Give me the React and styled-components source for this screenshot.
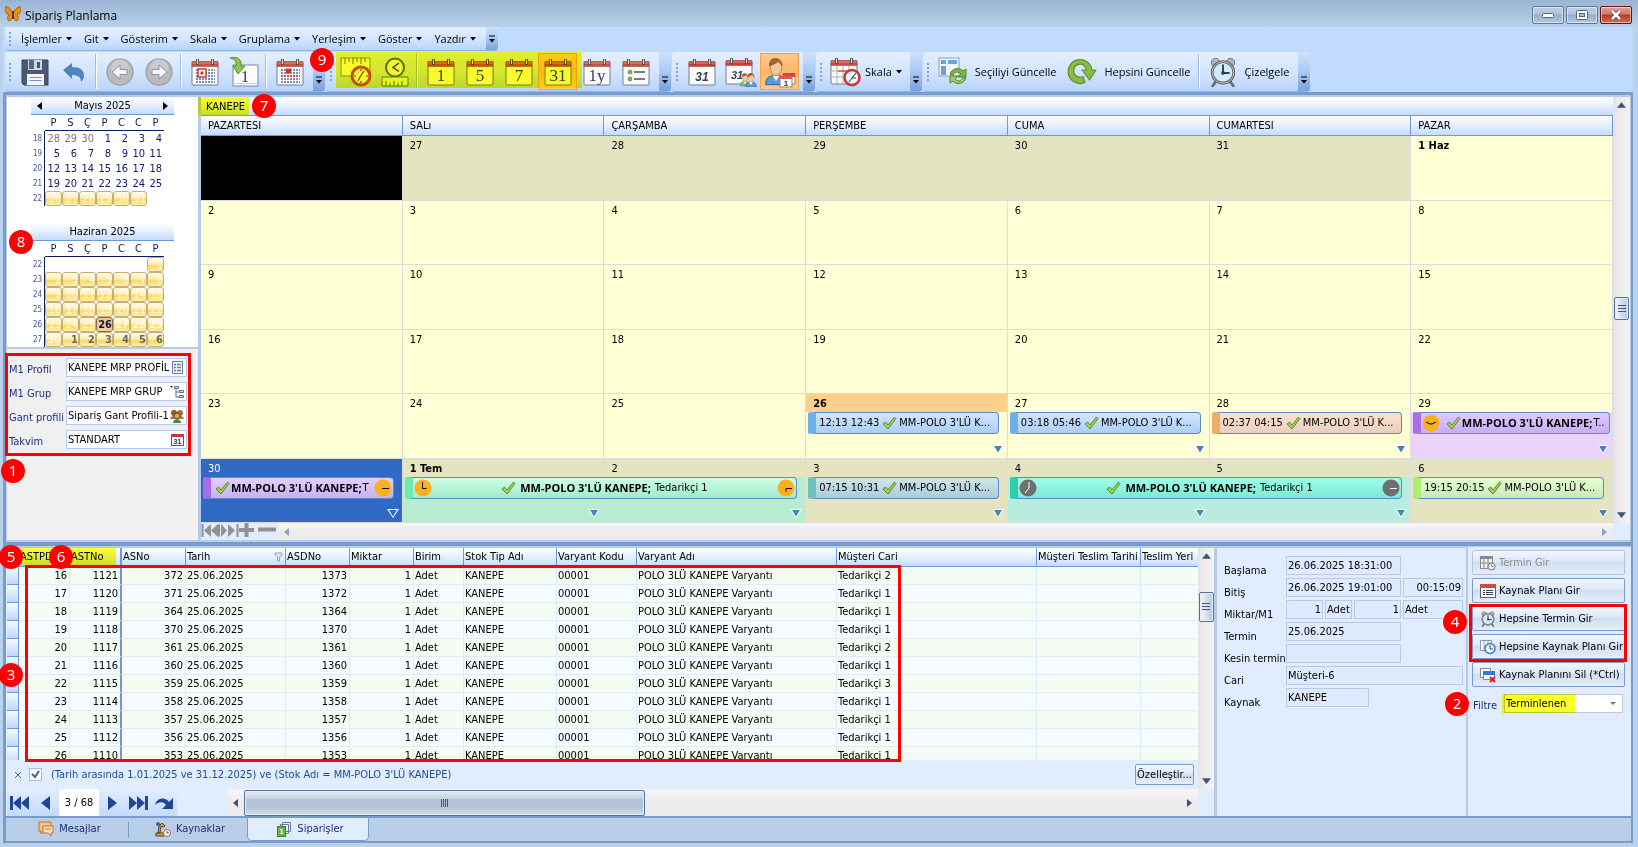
import React from "react";
import styled, { createGlobalStyle, css } from "styled-components";

const UI_FONT = `"DejaVu Sans Condensed", "Open Sans", sans-serif`;
const MENU_FONT = `"Open Sans", "Noto Sans", sans-serif`;

const COLORS = {
  frame: "#b9d1ea",
  chrome: "#bfdbff",
  dark: "#7a9ccc",
  edge: "#b5cbe8",
  pale: "#e1edff",
  line: "#6c9ad6",
  navy: "#1c2f7c",
  red: "#ff0000",
};

const headerFill = "linear-gradient(#ffffff, #e4efff 50%, #c5dcfe)";

const GlobalStyle = createGlobalStyle`
  * { box-sizing: border-box; }
  body {
    margin: 0;
    background: ${COLORS.frame};
    font-family: ${UI_FONT};
    font-size: 11px;
    line-height: 14px;
    color: #000;
  }
  button, input, select { font: inherit; color: inherit; }
  svg { flex: none; }
`;

/* ---------- data ---------- */

const MENUS = ["İşlemler", "Git", "Gösterim", "Skala", "Gruplama", "Yerleşim", "Göster", "Yazdır"];

const MONTHS = [
  {
    title: "Mayıs 2025",
    arrows: true,
    weeks: [
      [18, ["28o", "29o", "30o", "1", "2", "3", "4"]],
      [19, ["5", "6", "7", "8", "9", "10", "11"]],
      [20, ["12", "13", "14", "15", "16", "17", "18"]],
      [21, ["19", "20", "21", "22", "23", "24", "25"]],
      [22, ["26g", "27g", "28g", "29g", "30g", "31g", ""]],
    ],
  },
  {
    title: "Haziran 2025",
    weeks: [
      [22, ["", "", "", "", "", "", "1g"]],
      [23, ["2g", "3g", "4g", "5g", "6g", "7g", "8g"]],
      [24, ["9g", "10g", "11g", "12g", "13g", "14g", "15g"]],
      [25, ["16g", "17g", "18g", "19g", "20g", "21g", "22g"]],
      [26, ["23g", "24g", "25g", "26t", "27b", "28b", "29b"]],
      [27, ["30b", "1n", "2n", "3n", "4n", "5n", "6n"]],
    ],
  },
];

const DAYS = ["PAZARTESI", "SALı", "ÇARŞAMBA", "PERŞEMBE", "CUMA", "CUMARTESI", "PAZAR"];

const OFF = "#e5e4c0";
const ON = "#ffffd5";

// clock hands, drawn on an 18px dial
const HANDS = {
  three: "M8.500 3v6.500h4",
  quarter: "M15 9.500H8",
  open: "M4 8l4 2h2l4-2",
  corner: "M15 9.500H9v3",
  seven: "M10 3v6l-4 5",
};

const WEEKS = [
  {
    days: ["", "27", "28", "29", "30", "31", "1 Haz"],
    fills: ["#000000", OFF, OFF, OFF, OFF, OFF, ON],
  },
  { days: ["2", "3", "4", "5", "6", "7", "8"] },
  { days: ["9", "10", "11", "12", "13", "14", "15"] },
  { days: ["16", "17", "18", "19", "20", "21", "22"] },
  {
    days: ["23", "24", "25", "26", "27", "28", "29"],
    today: 3,
    more: [3, 4, 5, 6],
    tints: { 6: "#e8d4fd" },
    events: [
      { col: 4, time: "12:13 12:43", stripe: "#6faeea", from: "#d3e5ff", to: "#aacdf8" },
      { col: 5, time: "03:18 05:46", stripe: "#6faeea", from: "#d3e5ff", to: "#aacdf8" },
      { col: 6, time: "02:37 04:15", stripe: "#eeac6b", from: "#fbe2cf", to: "#e8cfbf" },
      { col: 7, clock: "open", rest: "T..", wide: true, stripe: "#ab6eea", from: "#dfcbff", to: "#c6adf5" },
    ],
  },
  {
    days: ["30", "1 Tem", "2", "3", "4", "5", "6"],
    fills: ["#316ac5", OFF, OFF, OFF, OFF, OFF, OFF],
    more: [0, 1, 2, 3, 4, 5, 6],
    tints: { 1: "#b8ecd2", 2: "#b8ecd2", 4: "#b8ecdf", 5: "#b8ecdf" },
    events: [
      { col: 1, rest: "T", endClock: "quarter", stripe: "#ab6eea", from: "#e4d0ff", to: "#c7b0f2" },
      { col: 2, span: 2, clock: "three", endClock: "corner", rest: "Tedarikçi 1", stripe: "#6febae", from: "#cdffe6", to: "#a2ebcb" },
      { col: 4, time: "07:15 10:31", stripe: "#6fc0c0", from: "#cfe6ea", to: "#a9ccd9" },
      { col: 5, span: 2, gray: true, clock: "seven", endClock: "quarter", rest: "Tedarikçi 1", stripe: "#30ccaa", from: "#9effe8", to: "#7de7d6" },
      { col: 7, time: "19:15 20:15", stripe: "#aeeb6f", from: "#e5ffcf", to: "#c9e9bd" },
    ],
  },
];

const COLUMNS = [
  ["", 12],
  ["ASTPD", 51],
  ["ASTNo", 52],
  ["ASNo", 64],
  ["Tarih", 100],
  ["ASDNo", 64],
  ["Miktar", 64],
  ["Birim", 50],
  ["Stok Tip Adı", 93],
  ["Varyant Kodu", 80],
  ["Varyant Adı", 200],
  ["Müşteri Cari", 200],
  ["Müşteri Teslim Tarihi", 104],
  ["Teslim Yeri", null],
];

const ORDERS = [
  [16, 1121, 372, 1373, 2],
  [17, 1120, 371, 1372, 1],
  [18, 1119, 364, 1364, 1],
  [19, 1118, 370, 1370, 1],
  [20, 1117, 361, 1361, 2],
  [21, 1116, 360, 1360, 1],
  [22, 1115, 359, 1359, 3],
  [23, 1114, 358, 1358, 1],
  [24, 1113, 357, 1357, 1],
  [25, 1112, 356, 1356, 1],
  [26, 1110, 353, 1353, 1],
];

/* ---------- icons ---------- */

const Svg = ({ w = 28, h = w, box, children }) => (
  <svg width={w} height={h} viewBox={box || `0 0 ${w} ${h}`} fill="none" aria-hidden="true">
    {children}
  </svg>
);

const Page = ({ children, tint = "#c9503f" }) => (
  <>
    <rect x="1" y="4" width="26" height="23" rx="1" fill="#f8fafd" stroke="#7b7f88" />
    <path d="M1 3.500h26v5H1z" fill={tint} stroke="#a8493c" strokeWidth=".6" />
    <path d="M1.500 5h25" stroke="#e98b7a" />
    <path d="M6.500 1v6M21.500 1v6" stroke="#555" strokeWidth="3" />
    <path d="M6.500 1.500v4.500M21.500 1.500v4.500" stroke="#e6e6e6" strokeWidth="1" />
    {children}
  </>
);

const PageIcon = ({ label, sans }) => (
  <Svg>
    <Page tint={sans ? "#d33a38" : undefined}>
      <text
        x="14"
        y="23"
        textAnchor="middle"
        fontSize={sans ? 12 : 17}
        fontFamily={sans ? "Liberation Sans" : "Liberation Serif"}
        fontWeight={sans ? "bold" : "normal"}
        fontStyle={sans ? "italic" : "normal"}
        fill="#3a4250"
      >
        {label}
      </text>
    </Page>
  </Svg>
);

const Dots = ({ row = -1 }) => (
  <>
    {[12, 15, 18, 21, 24].map((y, i) => (
      <path key={y} d={`M5 ${y}h19`} stroke={i === row ? "#d6543f" : "#7d8fb8"} strokeWidth="2" strokeDasharray="2 1" />
    ))}
  </>
);

const TargetPage = () => (
  <Svg>
    <Page>
      <Dots />
      <rect x="7" y="11" width="8" height="8" fill="#fff" stroke="#c33b2d" strokeWidth="1.500" />
      <rect x="9.500" y="13.500" width="3" height="3" fill="#c33b2d" />
    </Page>
  </Svg>
);

const WeekPage = () => (
  <Svg>
    <Page>
      <Dots row={2} />
      <rect x="10" y="10.500" width="5" height="5" fill="#c33b2d" />
    </Page>
  </Svg>
);

const ListPage = () => (
  <Svg>
    <Page>
      <circle cx="8" cy="14" r="2" fill="#7fb04c" stroke="#4f7d28" strokeWidth=".6" />
      <circle cx="8" cy="21" r="2" fill="#7fb04c" stroke="#4f7d28" strokeWidth=".6" />
      <path d="M12 14h11M12 21h11" stroke="#4a5160" strokeWidth="1.500" />
    </Page>
  </Svg>
);

const SaveIcon = () => (
  <Svg>
    <path d="M1 2h26v25H3l-2-2z" fill="#4b5a74" stroke="#38445a" />
    <path d="M7 2h14v10H7z" fill="#cfd6e2" />
    <path d="M8 2h5v9H8z" fill="#5a6880" />
    <path d="M16 4h3v6h-3z" fill="#46536b" />
    <path d="M6 16h17v11H6z" fill="#f3f6fb" />
    <path d="M8.500 19.500h12M8.500 22.500h12" stroke="#6a93cf" />
  </Svg>
);

const UndoIcon = () => (
  <Svg w={24}>
    <path d="M1 10l9-7v4c8 0 12 3 12 9 0 2-1 4-3 6 0-5-3-7-9-7v4z" fill="#4d86c0" />
  </Svg>
);

const RoundArrow = ({ flip }) => (
  <Svg>
    <circle cx="14" cy="14" r="13" fill="#b9babd" stroke="#a2a4a8" strokeWidth="1.500" />
    <circle cx="14" cy="10" r="9" fill="#d6d7d9" opacity=".6" />
    <path
      d={flip ? "M22 14l-8-7v4.500H7v5h7V21z" : "M6 14l8-7v4.500h7v5h-7V21z"}
      fill="#f7f7f7"
      stroke="#8d8f93"
    />
  </Svg>
);

const GotoIcon = () => (
  <Svg w={30} h={32}>
    <rect x="4" y="9" width="25" height="21" fill="#fbfcff" stroke="#7486ad" />
    <path d="M4 27.500h25" stroke="#c7d2e6" />
    <text x="16" y="26" textAnchor="middle" fontSize="16" fontFamily="Liberation Serif" fill="#2f3a4c">1</text>
    <path d="M1 2c7-2 12 1 11 8h4l-7 8-5-8h3c1-4-1-7-6-8z" fill="#8cc34c" stroke="#5d8f2b" />
  </Svg>
);

const RulerClock = () => (
  <Svg w={32} h={30}>
    <path d="M1 1h29v18H1z" fill="#fbfbd8" stroke="#8d9332" />
    <path d="M5 1v6M9 1v4M13 1v6M17 1v4M21 1v6M25 1v4" stroke="#6f7a2c" />
    <circle cx="21" cy="19" r="9" fill="#f7f6e4" stroke="#c0503a" strokeWidth="3" />
    <path d="M21 12v2M21 24v2M14 19h2M26 19h2M24 14l-4 6-2 4" stroke="#8a3c2d" strokeWidth="1.200" />
  </Svg>
);

const ClockRuler = () => (
  <Svg w={28} h={30}>
    <circle cx="14" cy="10.500" r="9" fill="#f3f6dc" stroke="#5c6a57" strokeWidth="2" />
    <path d="M18 6l-6 4.500 6 4" stroke="#3f4b44" strokeWidth="1.500" />
    <path d="M1 20h26v9H1z" fill="#e5f5a0" stroke="#4c8a5c" />
    <path d="M5 29v-5M9 29v-3M13 29v-5M17 29v-3M21 29v-5" stroke="#3f7a48" />
  </Svg>
);

const Person = ({ x, y, s = 1, shirt }) => (
  <g transform={`translate(${x} ${y}) scale(${s})`}>
    <path d="M-9 18c0-7 4-8 9-8s9 1 9 8z" fill={shirt} stroke="#2d5a93" strokeWidth=".8" />
    <path d="M-3 10l3 5 3-5z" fill="#fff" />
    <ellipse cx="0" cy="3" rx="5" ry="7" fill="#f1c79c" stroke="#9c6b3c" strokeWidth=".6" />
    <path d="M-6 2c-1-9 11-10 12 0-2-1-3-3-4-4-2 2-5 3-8 4z" fill="#9b6433" />
  </g>
);

const PeoplePage = () => (
  <Svg w={32} h={30}>
    <Page tint="#d33a38">
      <text x="12" y="22" textAnchor="middle" fontSize="11" fontWeight="bold" fontStyle="italic" fontFamily="Liberation Sans" fill="#3a4250">31</text>
    </Page>
    <Person x={20} y={19} s={0.55} shirt="#8fc15b" />
    <Person x={26} y={19} s={0.6} shirt="#5e9bdc" />
  </Svg>
);

const PersonPage = () => (
  <Svg w={32} h={32}>
    <Person x={12} y={8} s={1.150} shirt="#5b9ada" />
    <rect x="19" y="18" width="12" height="10" fill="#fff" stroke="#888" />
    <path d="M19 17h12v4H19z" fill="#d8453c" />
    <rect x="16" y="21" width="12" height="10" fill="#fff" stroke="#888" />
    <path d="M16 20h12v3H16z" fill="#e0564b" />
    <text x="22" y="30" textAnchor="middle" fontSize="8" fontWeight="bold" fontFamily="Liberation Sans" fill="#333">1</text>
  </Svg>
);

const ScaleIcon = () => (
  <Svg w={31} h={30}>
    <Page>
      <path d="M1 14h26M1 20h26M7 9v18M13 9v18M19 9v18" stroke="#a9b3c6" />
      <path d="M8 14h11v6" stroke="#d6543f" strokeWidth="1.500" />
    </Page>
    <circle cx="22" cy="20.500" r="7.500" fill="#f3f7fd" stroke="#c0392f" strokeWidth="2.500" />
    <path d="M26 16l-4 5-3 4M22 21h4" stroke="#4a5160" strokeWidth="1.200" />
  </Svg>
);

const UpdateIcon = () => (
  <Svg w={30}>
    <rect x="1" y="1" width="20" height="18" fill="#f4f8fe" stroke="#7f9ec8" />
    <path d="M3 3h5v4H3zM10 3h9v4h-9zM3 9h5v9H3z" fill="#6da0dc" />
    <path d="M12 17c2-6 10-7 13-3l3-2v8h-8l3-3c-3-3-6-2-8 1z" fill="#7fb544" stroke="#4e8524" />
    <path d="M28 21c-2 6-10 7-13 3l-3 2v-7h8l-3 3c3 3 6 2 8-1z" fill="#a3cf6a" stroke="#4e8524" />
  </Svg>
);

const RefreshIcon = () => (
  <Svg w={31} h={30}>
    <path
      d="M19 25.500A12 12 0 1 1 26 13h4L23.500 23 16 13h4.500a6.500 6.500 0 1 0-3.500 6.500z"
      fill="#8abb45"
      stroke="#5d8f2b"
      strokeWidth="1.200"
      strokeLinejoin="round"
    />
  </Svg>
);

const AlarmIcon = ({ size = 28 }) => (
  <Svg w={size} box="0 0 28 32">
    <path d="M7 25l-4 6M21 25l4 6" stroke="#6b6b6b" strokeWidth="3" strokeLinecap="round" />
    <circle cx="6" cy="6" r="4.500" fill="#b5b5b5" stroke="#6b6b6b" />
    <circle cx="22" cy="6" r="4.500" fill="#b5b5b5" stroke="#6b6b6b" />
    <circle cx="14" cy="16.500" r="11.500" fill="#d0ebfb" stroke="#5f6266" strokeWidth="3" />
    <circle cx="14" cy="16.500" r="11.500" stroke="#c8cacd" />
    <path d="M14 8v9h7" stroke="#3b3f45" strokeWidth="2" />
    <circle cx="14" cy="17" r="2" fill="#3b3f45" />
  </Svg>
);

const Butterfly = () => (
  <Svg w={16}>
    <path d="M8 8C6 3 3 0 0 1c0 5 1 7 4 8-2 2-2 4 0 6 2 0 3-2 4-5 1 3 2 5 4 5 2-2 2-4 0-6 3-1 4-3 4-8-3-1-6 2-8 7z" fill="#ef8a12" stroke="#8d4a0b" strokeWidth=".7" />
    <path d="M8 5v8" stroke="#3a1d07" strokeWidth="1.500" />
  </Svg>
);

const Check = () => (
  <Svg w={15} h={14}>
    <path d="M1 8l2.500-2L6 9l6.500-8L14 2.500 6 13z" fill="#a4cf58" stroke="#5d8a2c" strokeWidth="1" />
  </Svg>
);

const Clock = ({ hands, gray }) => (
  <Svg w={18}>
    <circle cx="9" cy="9" r="8.500" fill={gray ? "#6f6f6f" : "#fdb019"} />
    <path d={HANDS[hands]} stroke={gray ? "#fff" : "#000"} />
  </Svg>
);

const DocIcon = () => (
  <Svg w={13}>
    <rect x="1.500" y=".5" width="10" height="12" fill="#eef3fb" stroke="#6a7fa8" />
    <path d="M3 3.500h2M6 3.500h4M3 6.500h2M6 6.500h4M3 9.500h2M6 9.500h4" stroke="#6a7fa8" strokeWidth="1.500" />
  </Svg>
);

const TreeIcon = () => (
  <Svg w={14}>
    <path d="M0 1h3L1.500 3z" fill="#333" />
    <path d="M6 4v8h4M6 7h4" stroke="#5d6f8f" />
    <path d="M4.500 1.500h4v2h-4zM9.500 5.500h4v2h-4zM9.500 10.500h4v2h-4z" fill="#cfe0f5" stroke="#5d6f8f" />
  </Svg>
);

const CrewIcon = () => (
  <Svg w={14}>
    <circle cx="4" cy="4" r="3" fill="#8b5a2b" />
    <circle cx="10" cy="4" r="3" fill="#a0713a" />
    <path d="M0 10c0-4 7-4 7 0zM7 10c0-4 7-4 7 0z" fill="#b28042" />
    <circle cx="7" cy="7" r="3" fill="#d9a05c" stroke="#6b4520" />
    <path d="M3 14c0-5 8-5 8 0z" fill="#3f8b45" />
  </Svg>
);

const SmallCalendar = ({ label = "31" }) => (
  <Svg w={13}>
    <rect x=".5" y="1.500" width="12" height="11" fill="#fff" stroke="#56606e" />
    <path d="M0 1h13v3H0z" fill="#cc3b3b" />
    <text x="6.500" y="11" textAnchor="middle" fontSize="7" fontWeight="bold" fontFamily="Liberation Sans" fill="#2a3445">{label}</text>
  </Svg>
);

const TableClock = () => (
  <Svg w={16}>
    <rect x=".5" y="1.500" width="12" height="12" fill="#f0f0f0" stroke="#8a8a8a" />
    <path d="M0 1h13v3H0z" fill="#8a8a8a" />
    <path d="M4 4v9M8 4v9M0 8h13" stroke="#8a8a8a" />
    <circle cx="11.500" cy="11.500" r="3.500" fill="#f4f4f4" stroke="#777" />
    <path d="M11.500 9.500v2h2" stroke="#777" />
  </Svg>
);

const PlanIcon = () => (
  <Svg w={16}>
    <rect x=".5" y="1.500" width="15" height="13" fill="#fff" stroke="#5a5f69" />
    <path d="M0 1h16v4H0z" fill="#cf4a42" />
    <path d="M3 7.500h2M3 9.500h2M3 11.500h2M6 7.500h7M6 9.500h7M6 11.500h7" stroke="#3c4250" />
  </Svg>
);

const BlueClockIcon = () => (
  <Svg w={16}>
    <path d="M.5 1.500h11v10H.5zM4 1.500v10M8 1.500v10" fill="#fff" stroke="#8b98b0" />
    <circle cx="10" cy="9.500" r="5" fill="#eaf4ff" stroke="#3f78c4" strokeWidth="1.500" />
    <path d="M10 6v4h3" stroke="#2d4f85" />
  </Svg>
);

const RemoveIcon = () => (
  <Svg w={16}>
    <path d="M.5 1.500h10v9H.5z" fill="#fff" stroke="#7d8797" />
    <path d="M3.500 4.500h11v8h-11z" fill="#fff" stroke="#7d8797" />
    <path d="M3 4h12v4H3z" fill="#2f7dd6" />
    <path d="M10 10l5 5M15 10l-5 5" stroke="#d9211d" strokeWidth="2" />
  </Svg>
);

const MessageIcon = () => (
  <Svg w={16}>
    <path d="M1 1h12v9H6l-3 3v-3H1z" fill="#f6c583" stroke="#b97423" />
    <path d="M5 5h10v7h-2v3l-3-3H5z" fill="#fce3bd" stroke="#b97423" />
    <path d="M7 8h6" stroke="#b97423" />
  </Svg>
);

const ResourceIcon = () => (
  <Svg w={16}>
    <path d="M1 12h8v3H1zM3 12l1-7 3-3 3 3-2 1-2-1-1 7z" fill="#d9a92e" stroke="#49412a" />
    <circle cx="3" cy="3" r="2" fill="#3a6496" />
    <circle cx="12" cy="12" r="3.500" fill="#fff" stroke="#c9524a" />
    <path d="M12 10v2h2" stroke="#555" />
  </Svg>
);

const OrdersIcon = () => (
  <Svg w={16}>
    <path d="M6.500 1.500h8v9h-8zM4.500 3.500h8v9h-8z" fill="#eef4fb" stroke="#62799e" />
    <rect x="1.500" y="5.500" width="8" height="10" fill="#6bb04a" stroke="#3d7d23" />
    <text x="5.500" y="13" textAnchor="middle" fontSize="8" fontWeight="bold" fontFamily="Liberation Sans" fill="#fff">1</text>
  </Svg>
);

const Tri = ({ dir = "down", color = "#3d5277", size = 8 }) => {
  const d = {
    down: "M0 2h8L4 7z",
    up: "M0 6h8L4 1z",
    left: "M6 0v8L1 4z",
    right: "M2 0v8l5-4z",
  }[dir];
  return (
    <Svg w={size} box="0 0 8 8">
      <path d={d} fill={color} />
    </Svg>
  );
};

/* ---------- window chrome ---------- */

const Window = styled.div`
  min-width: 1320px;
  min-height: 100vh;
  display: flex;
  flex-direction: column;
  padding: 0 5px 4px 3px;
  background: ${COLORS.frame};
`;

const TitleBar = styled.header`
  height: 27px;
  margin: 0 -5px 0 -3px;
  padding: 6px 6px 0 5px;
  display: flex;
  align-items: flex-start;
  background: linear-gradient(#9ab4d1, #b9d1ea);
`;

const Title = styled.h1`
  flex: 1;
  margin: 0 0 0 4px;
  font: 12px/20px ${MENU_FONT};
`;

const WindowButton = styled.button`
  width: 32px;
  height: 18px;
  margin-left: 2px;
  padding: 0;
  display: grid;
  place-items: center;
  border: 1px solid ${(p) => (p.$close ? "#5b1a1a" : "#5d7796")};
  border-radius: 2px;
  box-shadow: inset 0 0 0 1px rgba(255, 255, 255, 0.5);
  background: ${(p) =>
    p.$close
      ? "linear-gradient(#e3a298, #d1766a 45%, #b43a24 50%, #d0705a)"
      : "linear-gradient(#bdd0e5, #aec5de 45%, #93aeca 50%, #b3cbe3)"};
`;

const MenuRow = styled.div`
  display: flex;
  height: 25px;
  padding: 0 0 1px 2px;
  background: ${COLORS.chrome};
`;

const ToolRow = styled.div`
  display: flex;
  gap: 1px;
  height: 40px;
  padding-left: 2px;
  background: ${COLORS.chrome};
`;

const Group = styled.div`
  position: relative;
  display: flex;
  align-items: center;
  border-radius: 3px;
  border-bottom: 1px solid #8fb3e6;
  background: linear-gradient(#e3efff, #d2e4fe 55%, #b7d4fc);
  font-family: ${MENU_FONT};
  font-size: 11px;
`;

const Grip = styled.span`
  width: 10px;
  height: ${(p) => p.$h || 18}px;
  background: repeating-linear-gradient(#7ba4dc 0 2px, transparent 2px 4px) 4px 0 / 2px 100% no-repeat;
`;

const Overflow = styled.button`
  align-self: stretch;
  width: 12px;
  margin-left: 4px;
  padding: 0 0 7px;
  display: flex;
  align-items: flex-end;
  justify-content: center;
  border: 0;
  border-radius: 0 3px 3px 0;
  background: linear-gradient(#cfe1fb, #a9c9f5 50%, #78a1dc);
`;

const MenuButton = styled.button`
  height: 24px;
  padding: 0 6px;
  display: flex;
  align-items: center;
  gap: 4px;
  border: 0;
  background: none;
`;

const ToolButton = styled.button`
  min-width: 39px;
  height: 37px;
  padding: 0 ${(p) => p.$text || 0}px;
  display: flex;
  align-items: center;
  justify-content: center;
  gap: ${(p) => (p.$text > 3 ? 7 : 4)}px;
  white-space: nowrap;
  border: 1px solid ${(p) => (p.$active ? "#f5a04a" : "transparent")};
  background: ${(p) => (p.$active ? "linear-gradient(#ffca8b, #ffb867 50%, #ffcb82)" : "none")};
`;

const Divider = styled.span`
  width: 2px;
  height: 35px;
  margin: 0 3px 0 2px;
  border-left: 1px solid #9cbfee;
  border-right: 1px solid #fff;
`;

const More = () => (
  <Svg w={6} h={8}>
    <path d="M0 1h6" stroke="#000" />
    <path d="M0 4h6L3 7.500z" fill="#000" />
  </Svg>
);

const Caret = () => (
  <Svg w={6} h={4}>
    <path d="M0 0h6L3 3.500z" fill="#000" />
  </Svg>
);

/* ---------- numbered marks ---------- */

const Badge = styled.span`
  position: absolute;
  z-index: 5;
  left: ${(p) => p.$x}px;
  top: ${(p) => p.$y}px;
  width: 24px;
  height: 24px;
  border-radius: 50%;
  background: ${COLORS.red};
  color: #fff;
  text-align: center;
  font: 15px/23px "Noto Sans", sans-serif;
`;

const Marker = styled.span`
  position: absolute;
  z-index: 2;
  left: ${(p) => p.$x}px;
  top: ${(p) => p.$y || 0}px;
  width: ${(p) => p.$w}px;
  height: ${(p) => p.$h}px;
  background: #ffff2e;
  mix-blend-mode: multiply;
  pointer-events: none;
`;

const RedFrame = styled.span`
  position: absolute;
  z-index: 4;
  inset: ${(p) => p.$inset};
  border: 3px solid ${COLORS.red};
  pointer-events: none;
`;

/* ---------- panes ---------- */

const Body = styled.main`
  flex: 1;
  display: flex;
  flex-direction: column;
  border: 3px solid ${COLORS.dark};
  border-right-width: 2px;
  border-bottom-width: 2px;
  background: ${COLORS.pale};
`;

const Upper = styled.section`
  flex: 1;
  display: flex;
  border: solid ${COLORS.edge};
  border-width: 2px 1px 2px 1px;
`;

const Lower = styled.section`
  height: 276px;
  display: flex;
  border: solid ${COLORS.dark};
  border-width: 4px 0 2px;
`;

const Side = styled.aside`
  position: relative;
  width: 194px;
  display: flex;
  flex-direction: column;
  border-right: 3px solid ${COLORS.edge};
  background: #f0f0f0;
`;

const Months = styled.div`
  height: 252px;
  padding-left: 24px;
  background: #fff;
  border-bottom: 2px solid ${COLORS.edge};
`;

const Month = styled.div`
  width: 143px;
  height: 126px;
`;

const MonthTitle = styled.div`
  height: 18px;
  padding: 0 5px;
  display: flex;
  align-items: center;
  justify-content: ${(p) => (p.$arrows ? "space-between" : "center")};
  border-bottom: 1px solid ${COLORS.line};
  background: ${headerFill};
`;

const ArrowButton = styled.button`
  padding: 0;
  display: flex;
  border: 0;
  background: none;
`;

const MiniTable = styled.table`
  border-collapse: separate;
  border-spacing: 0;
  table-layout: fixed;
  width: 133px;
  color: #0a1a66;
  text-align: center;

  th {
    height: 16px;
    padding: 0;
    font-weight: normal;
    border-bottom: 1px solid #0a1a66;
  }
  th:first-child {
    width: 14px;
    border-bottom: 0;
  }
`;

const WeekNo = styled.td`
  padding: 0;
  font-size: 8px;
  line-height: 15px;
  color: #4b578c;
  border-right: 1px solid #0a1a66;
`;

const dayKinds = {
  o: css`
    color: #777;
  `,
  g: css`
    color: #fffbe8;
  `,
  b: css`
    color: #fffbe8;
    font-weight: bold;
  `,
  n: css`
    color: #6e6a58;
    font-weight: bold;
  `,
  t: css`
    color: #0a1245;
    font-weight: bold;
  `,
};

const MiniDay = styled.td`
  height: 15px;
  padding: 0 ${(p) => ("gbnt".includes(p.$kind) ? 0 : 2)}px 0 0;
  line-height: 13px;
  text-align: right;
  ${(p) =>
    "gbnt".includes(p.$kind) &&
    css`
      border: 1px solid #c9ad72;
      border-radius: 3px;
      background: linear-gradient(#fffbe9, #fdeeb4 45%, #fbd75c 60%, #fdf0bb);
    `}
  ${(p) =>
    p.$kind === "t" &&
    css`
      border-color: #8c6a4c;
      background: linear-gradient(#ecc090, #f7cf9c);
    `}
  ${(p) => dayKinds[p.$kind]}
`;

const Form = styled.form`
  position: relative;
  height: 107px;
  padding: 9px 11px 0 2px;
  display: flex;
  flex-direction: column;
  gap: 5px;
`;

const Row = styled.div`
  display: grid;
  grid-template-columns: 57px minmax(0, 1fr);
  align-items: end;
  white-space: nowrap;
  color: ${COLORS.navy};
`;

const IconField = styled.span`
  height: 19px;
  padding-right: 2px;
  display: flex;
  align-items: center;
  border: 1px solid ${COLORS.edge};
  background: #fff;
`;

const BareInput = styled.input`
  flex: 1;
  width: 100%;
  min-width: 0;
  height: 17px;
  padding: 0 0 0 1px;
  border: 0;
  outline: 0;
  background: none;
  color: #000;
`;

/* ---------- calendar ---------- */

const Scheduler = styled.div`
  flex: 1;
  display: grid;
  grid-template: 1fr 17px / minmax(0, 1fr) 17px;
`;

const Sheet = styled.div`
  position: relative;
  display: flex;
  flex-direction: column;
`;

const Resource = styled.div`
  height: 19px;
  padding: 3px 5px;
  border-bottom: 1px solid ${COLORS.line};
  background: ${headerFill};
`;

const DayNames = styled.div`
  height: 20px;
  display: grid;
  grid-template-columns: repeat(7, minmax(0, 1fr));
  border-bottom: 1px solid ${COLORS.line};
  background: ${headerFill};
`;

const DayName = styled.span`
  padding: 3px 7px;
  border-right: 1px solid ${COLORS.line};
`;

const Week = styled.div`
  flex: 1;
  min-height: 60px;
  display: grid;
  grid-template: 1fr / repeat(7, minmax(0, 1fr));
`;

const Day = styled.div`
  grid-row: 1;
  grid-column: ${(p) => p.$col};
  display: flex;
  flex-direction: column;
  border: solid #dcdcdc;
  border-width: 0 1px 1px 0;
  background: ${(p) => p.$fill};
  color: ${(p) => (p.$fill === "#316ac5" ? "#fff" : "#000")};
  font-weight: ${(p) => (p.$bold ? "bold" : "normal")};
`;

const DayLabel = styled.span`
  height: 18px;
  padding: 3px 7px 0;
  background: ${(p) => (p.$today ? "#ffcf8c" : "none")};
`;

const DayFill = styled.span`
  flex: 1;
  padding: 0 3px 3px;
  display: flex;
  align-items: flex-end;
  justify-content: flex-end;
  background: ${(p) => p.$tint || "none"};
`;

const Event = styled.div`
  grid-row: 1;
  grid-column: ${(p) => `${p.$col} / span ${p.$span}`};
  height: 22px;
  margin: 18px ${(p) => (p.$wide ? 3 : 9)}px 0 2px;
  padding: 0 1px;
  display: flex;
  align-items: center;
  gap: 2px;
  overflow: hidden;
  white-space: nowrap;
  border: 1px solid #5b8bc6;
  border-left: 8px solid ${(p) => p.$stripe};
  border-radius: 2px 4px 4px 2px;
  background: linear-gradient(${(p) => p.$from}, ${(p) => p.$to});
`;

const EventTime = styled.span`
  padding: 0 1px 0 2px;
`;

const EventText = styled.span`
  flex: 1;
  min-width: 0;
  display: flex;
  align-items: center;
  justify-content: center;
  gap: ${(p) => (p.$roomy ? 4 : 1)}px;

  b {
    font-family: "Open Sans", sans-serif;
  }
`;

const VScroll = styled.div`
  grid-row: ${(p) => p.$rows || 1};
  grid-column: 2;
  padding: 4px 0;
  display: flex;
  flex-direction: column;
  align-items: center;
  background: linear-gradient(90deg, #e4e4e4, #f4f4f4);
`;

const thumb = css`
  border: 1px solid #55709c;
  border-radius: 2px;
  box-shadow: inset 0 0 0 1px #e6edf6;
`;

const VThumb = styled.span`
  width: 15px;
  height: ${(p) => p.$h}px;
  margin: ${(p) => p.$before} 0 auto;
  display: grid;
  place-items: center;
  background: linear-gradient(90deg, #f4f7fb, #b9c8dc);
  ${thumb}
`;

const HScroll = styled.div`
  flex: 1;
  display: flex;
  align-items: center;
  justify-content: space-between;
  padding: 0 5px;
  background: linear-gradient(#f6f6f6, #ececec 50%);
`;

const HThumb = styled.span`
  width: 401px;
  height: 26px;
  margin: 0 auto 0 4px;
  display: grid;
  place-items: center;
  background: linear-gradient(#e3e9f0, #c9d5e3 30%, #b5c4d8 35%, #b4c3d7 70%, #d4dfec);
  ${thumb}
`;

const Footer = styled.div`
  display: flex;
`;

const ZoomTools = styled.div`
  width: 77px;
  display: flex;
  align-items: flex-start;
`;

const Grab = ({ vertical }) => (
  <Svg w={10}>
    <path d={vertical ? "M1 1.500h8M1 4.500h8M1 7.500h8" : "M1.500 1v8M3.500 1v8M5.500 1v8M7.500 1v8"} stroke="#44587c" />
  </Svg>
);

/* ---------- order grid ---------- */

const GridPane = styled.div`
  position: relative;
  flex: 1;
  min-width: 0;
  display: grid;
  grid-template: 212px 29px 1fr / minmax(0, 1fr) 16px;
  padding: 0 0 0 1px;
  border-top: 2px solid ${COLORS.edge};
`;

const TableClip = styled.div`
  overflow: hidden;
  background: #fff;
`;

const OrderTable = styled.table`
  width: 100%;
  table-layout: fixed;
  border-collapse: separate;
  border-spacing: 0;

  th {
    height: 19px;
    padding: 0 0 0 1px;
    overflow: hidden;
    white-space: nowrap;
    text-align: left;
    font-weight: normal;
    border: solid ${COLORS.line};
    border-width: 0 1px 1px 0;
    background: ${headerFill};
  }
  td {
    height: 18px;
    padding: 0 2px 0 1px;
    overflow: hidden;
    white-space: nowrap;
    border: solid #deebfd;
    border-width: 0 1px 1px 0;
  }
  td:first-child {
    border-color: ${COLORS.line};
    background: linear-gradient(#f6faff, #bed7fd);
  }
  th:nth-child(3), td:nth-child(3) {
    border-right: 2px solid ${COLORS.line};
  }
  th:last-child, td:last-child {
    border-right: 0;
  }
  tbody tr:nth-child(odd) td:not(:first-child) {
    background: #f4fcf3;
  }
  tbody tr:nth-child(even) td:not(:first-child) {
    background: #f5fbff;
  }
`;

const Num = styled.td`
  text-align: right;
`;

const HeadFilter = styled.span`
  float: right;
  display: flex;
  padding: 2px 2px 0 0;
`;

const FilterBar = styled.div`
  grid-column: 1;
  display: flex;
  align-items: center;
  gap: 6px;
  padding: 0 4px 0 6px;
  color: #1d4a9b;
`;

const FilterClose = styled.button`
  padding: 0 1px;
  display: flex;
  border: 0;
  background: none;
`;

const FilterLabel = styled.label`
  flex: 1;
  display: flex;
  align-items: center;
  gap: 9px;
`;

const CheckBox = styled.input`
  appearance: none;
  flex: none;
  width: 13px;
  height: 13px;
  margin: 0;
  border: 1px solid #a9bddb;
  background: #f7f9fc
    url("data:image/svg+xml,%3Csvg xmlns='http://www.w3.org/2000/svg' viewBox='0 0 11 11'%3E%3Cpath d='M2 5l3 3 4-6' fill='none' stroke='%234d5f80' stroke-width='2'/%3E%3C/svg%3E");
`;

const PushButton = styled.button`
  height: ${(p) => p.$h || 25}px;
  padding: 0 1px 0 ${(p) => (p.$h ? 1 : 7)}px;
  display: flex;
  align-items: center;
  gap: 3px;
  white-space: nowrap;
  border: 1px solid #7a9ac8;
  border-radius: 2px;
  background: linear-gradient(#f2f7fe, #dde8f7 45%, #cfdef2 50%, #e4eefb);
  color: #000;

  &:disabled {
    color: #8d8d8d;
    border-color: #b3c4dc;
  }
`;

const NavRow = styled.div`
  grid-column: 1;
  display: flex;
`;

const Nav = styled.div`
  width: 170px;
  margin-right: 50px;
  display: flex;
  align-items: stretch;
  background: linear-gradient(#e1edff, #c3dafc);
`;

const NavButton = styled.button`
  flex: 1 1 0;
  padding: 0;
  display: grid;
  place-items: center;
  border: 0;
  background: none;
`;

const NavCount = styled.span`
  width: 40px;
  display: grid;
  place-items: center;
  background: #fff;
`;

/* ---------- detail ---------- */

const Details = styled.form`
  position: relative;
  width: 252px;
  padding: 8px 3px 0 7px;
  display: flex;
  flex-direction: column;
  gap: 3px;
  border: solid ${COLORS.edge};
  border-width: 2px 0 0 3px;
`;

const DetailRow = styled.div`
  height: 19px;
  display: grid;
  grid-template-columns: 60px ${(p) => p.$cols};
  column-gap: 2px;
  align-items: end;

  label {
    margin-bottom: -3px;
    white-space: nowrap;
  }
`;

const Field = styled.input`
  width: 100%;
  height: 19px;
  padding: 0 1px;
  border: 1px solid ${COLORS.edge};
  background: #dfebfc;
  text-align: ${(p) => p.$align || "left"};
`;

const Actions = styled.div`
  position: relative;
  width: 165px;
  padding: 3px 6px 0 4px;
  display: flex;
  flex-direction: column;
  gap: 3px;
  border: solid ${COLORS.edge};
  border-width: 1px 0 0 2px;
`;

const Framed = styled.div`
  position: relative;
  display: flex;
  flex-direction: column;
  gap: 3px;
`;

const FilterRow = styled.div`
  position: relative;
  margin: 4px 2px 0 1px;
  display: grid;
  grid-template-columns: 31px 1fr;
  align-items: end;
  color: ${COLORS.navy};
`;

const Select = styled.select`
  appearance: none;
  height: 19px;
  padding: 0 1px;
  border: 1px solid ${COLORS.edge};
  border-radius: 0;
  background: #fff
    url("data:image/svg+xml,%3Csvg xmlns='http://www.w3.org/2000/svg' viewBox='0 0 6 4'%3E%3Cpath d='M0 0h6L3 3z' fill='%235b7fb5'/%3E%3C/svg%3E")
    right 6px center / 6px 4px no-repeat;
  color: #000;
`;

/* ---------- bottom tabs ---------- */

const Tabs = styled.nav`
  height: 23px;
  padding-left: 1px;
  display: flex;
  background: #b8cde8;
`;

const Tab = styled.button`
  width: ${(p) => p.$w}px;
  padding: 0 0 0 4px;
  display: flex;
  align-items: center;
  justify-content: center;
  gap: 5px;
  border: 1px solid ${(p) => (p.$active ? "#7a9ccc" : "transparent")};
  border-top: 0;
  border-radius: 0 0 5px 5px;
  background: ${(p) => (p.$active ? COLORS.pale : "none")};
  color: ${COLORS.navy};
`;

const TabLine = styled.span`
  width: 1px;
  height: 16px;
  margin-top: 4px;
  background: #7a9ccc;
`;

/* ---------- components ---------- */

const MiniMonth = ({ month }) => (
  <Month>
    <MonthTitle $arrows={month.arrows}>
      {month.arrows && (
        <ArrowButton aria-label="Önceki ay">
          <Tri dir="left" color="#000" />
        </ArrowButton>
      )}
      {month.title}
      {month.arrows && (
        <ArrowButton aria-label="Sonraki ay">
          <Tri dir="right" color="#000" />
        </ArrowButton>
      )}
    </MonthTitle>
    <MiniTable>
      <thead>
        <tr>
          <th />
          {["P", "S", "Ç", "P", "C", "C", "P"].map((d, i) => (
            <th key={i}>{d}</th>
          ))}
        </tr>
      </thead>
      <tbody>
        {month.weeks.map(([no, days]) => (
          <tr key={no}>
            <WeekNo>{no}</WeekNo>
            {days.map((d, i) => {
              const kind = d.replace(/\d/g, "");
              return (
                <MiniDay key={i} $kind={kind || "-"}>
                  {d.replace(/\D/g, "")}
                </MiniDay>
              );
            })}
          </tr>
        ))}
      </tbody>
    </MiniTable>
  </Month>
);

const ProfileForm = () => {
  const fields = [
    ["M1 Profil", "KANEPE MRP PROFİL", <DocIcon />],
    ["M1 Grup", "KANEPE MRP GRUP", <TreeIcon />],
    ["Gant profili", "Sipariş Gant Profili-1", <CrewIcon />],
    ["Takvim", "STANDART", <SmallCalendar />],
  ];
  return (
    <Form>
      {fields.map(([label, value, icon], i) => (
        <Row key={label}>
          <label htmlFor={`profile-${i}`}>{label}</label>
          <IconField>
            <BareInput id={`profile-${i}`} defaultValue={value} />
            {icon}
          </IconField>
        </Row>
      ))}
      <RedFrame $inset="4px 7px 0 -2px" />
      <Badge $x={-6} $y={110}>1</Badge>
    </Form>
  );
};

const EventBar = ({ event }) => (
  <Event
    $col={event.col}
    $span={event.span || 1}
    $wide={event.wide}
    $stripe={event.stripe}
    $from={event.from}
    $to={event.to}
  >
    {event.time ? (
      <>
        <EventTime>{event.time}</EventTime>
        <Check />
        <span>MM-POLO 3'LÜ K...</span>
      </>
    ) : (
      <>
        {event.clock && <Clock hands={event.clock} gray={event.gray} />}
        <EventText $roomy={event.span > 1}>
          <Check />
          <b>MM-POLO 3'LÜ KANEPE;</b>
          <span>{event.rest}</span>
        </EventText>
        {event.endClock && <Clock hands={event.endClock} gray={event.gray} />}
      </>
    )}
  </Event>
);

const MoreMark = ({ inverse }) => (
  <Svg w={12} h={10}>
    <path d="M0 0h12L6 9z" fill="#fff" />
    <path d="M2 1h8L6 7.500z" fill={inverse ? "#316ac5" : "#4f7fbb"} />
  </Svg>
);

const Calendar = () => (
  <Scheduler>
    <Sheet>
      <Resource>KANEPE</Resource>
      <Marker $x={-3} $w={51} $h={18} />
      <Badge $x={51} $y={-3}>7</Badge>
      <DayNames>
        {DAYS.map((d) => (
          <DayName key={d}>{d}</DayName>
        ))}
      </DayNames>
      {WEEKS.map((week, w) => (
        <Week key={w}>
          {week.days.map((d, i) => (
            <Day key={i} $col={i + 1} $fill={week.fills ? week.fills[i] : ON} $bold={/[A-Z]/.test(d) || week.today === i}>
              <DayLabel $today={week.today === i}>{d}</DayLabel>
              <DayFill $tint={week.tints && week.tints[i]}>
                {week.more && week.more.includes(i) && <MoreMark inverse={w === 5 && i === 0} />}
              </DayFill>
            </Day>
          ))}
          {week.events && week.events.map((e) => <EventBar key={e.col} event={e} />)}
        </Week>
      ))}
    </Sheet>
    <VScroll>
      <Tri dir="up" size={9} />
      <VThumb $h={23} $before="187px">
        <Grab vertical />
      </VThumb>
      <Tri size={9} />
    </VScroll>
    <Footer>
      <ZoomTools>
        <Svg w={77} h={15}>
          <path d="M1.500 1v13M36.500 1v13" stroke="#929292" strokeWidth="2" />
          <path d="M10 1v13L3 7.500zM17 1v13l-7-6.500zM18 1v13l-7-6.500zM19 1v13l-1-6.500zM20 1v13l6-6.500zM27 1v13l7-6.500zM19 1v13l-6-6.500z" fill="#929292" />
          <path d="M45.500 0v14M38 7h15M57 6.500h18" stroke="#929292" strokeWidth="4" />
        </Svg>
      </ZoomTools>
      <HScroll>
        <Tri dir="left" color="#8ea0c2" />
        <Tri dir="right" color="#8ea0c2" />
      </HScroll>
    </Footer>
  </Scheduler>
);

const Orders = () => (
  <GridPane>
    <TableClip>
      <OrderTable>
        <colgroup>
          {COLUMNS.map(([name, width]) => (
            <col key={name} width={width || undefined} />
          ))}
        </colgroup>
        <thead>
          <tr>
            {COLUMNS.map(([name]) => (
              <th key={name}>
                {name === "Tarih" && (
                  <HeadFilter>
                    <Svg w={9} h={10}>
                      <path d="M1 1h7v2L5.500 5v4h-2V5L1 3z" fill="#dce8fa" stroke="#8aa5d0" />
                    </Svg>
                  </HeadFilter>
                )}
                {name}
              </th>
            ))}
          </tr>
        </thead>
        <tbody>
          {ORDERS.map(([plan, ast, as, asd, supplier]) => (
            <tr key={plan}>
              <td />
              <Num>{plan}</Num>
              <Num>{ast}</Num>
              <Num>{as}</Num>
              <td>25.06.2025</td>
              <Num>{asd}</Num>
              <Num>1</Num>
              <td>Adet</td>
              <td>KANEPE</td>
              <td>00001</td>
              <td>POLO 3LÜ KANEPE Varyantı</td>
              <td>Tedarikçi {supplier}</td>
              <td />
              <td />
            </tr>
          ))}
        </tbody>
      </OrderTable>
    </TableClip>
    <VScroll $rows="1 / 3">
      <Tri dir="up" size={9} />
      <VThumb $h={30} $before="31px">
        <Grab vertical />
      </VThumb>
      <Tri size={9} />
    </VScroll>
    <FilterBar>
      <FilterClose aria-label="Filtreyi kapat">
        <Svg w={8}>
          <path d="M1 1l6 6M7 1L1 7" stroke="#3f68ac" />
        </Svg>
      </FilterClose>
      <FilterLabel>
        <CheckBox type="checkbox" defaultChecked />
        (Tarih arasında 1.01.2025 ve 31.12.2025) ve (Stok Adı = MM-POLO 3'LÜ KANEPE)
      </FilterLabel>
      <PushButton $h={21}>Özelleştir...</PushButton>
    </FilterBar>
    <NavRow>
      <Nav>
        <NavButton aria-label="İlk">
          <Svg w={20} h={16}>
            <path d="M0 1h3v14H0zM11 1v14L3 8zM19 1v14l-8-7z" fill="#1e4795" />
          </Svg>
        </NavButton>
        <NavButton aria-label="Önceki">
          <Svg w={10} h={14}>
            <path d="M9 0v14L0 7z" fill="#1e4795" />
          </Svg>
        </NavButton>
        <NavCount>3 / 68</NavCount>
        <NavButton aria-label="Sonraki">
          <Svg w={10} h={14}>
            <path d="M1 0v14l9-7z" fill="#1e4795" />
          </Svg>
        </NavButton>
        <NavButton aria-label="Son">
          <Svg w={20} h={16}>
            <path d="M17 1h3v14h-3zM9 1v14l8-7zM1 1v14l8-7z" fill="#1e4795" />
          </Svg>
        </NavButton>
        <NavButton aria-label="Yenile">
          <Svg w={20} h={16}>
            <path d="M1 10C3 2 12 2 15 7l4-4v11H8l4-4C9 6 4 7 1 10z" fill="#1e4795" />
          </Svg>
        </NavButton>
      </Nav>
      <HScroll>
        <Tri dir="left" />
        <HThumb>
          <Grab />
        </HThumb>
        <Tri dir="right" />
      </HScroll>
    </NavRow>
    <Marker $x={15} $w={95} $h={18} />
    <RedFrame $inset="17px 313px 54px 19px" />
    <Badge $x={-7} $y={-3}>5</Badge>
    <Badge $x={43} $y={-3}>6</Badge>
    <Badge $x={-7} $y={115}>3</Badge>
  </GridPane>
);

const DETAILS = [
  ["Başlama", "115px", [["26.06.2025 18:31:00"]]],
  ["Bitiş", "115px 1fr", [["26.06.2025 19:01:00"], ["00:15:09", "right"]]],
  ["Miktar/M1", "37px 27px 47px 1fr", [["1", "right"], ["Adet"], ["1", "right"], ["Adet"]]],
  ["Termin", "115px", [["25.06.2025"]]],
  ["Kesin termin", "115px", [[""]]],
  ["Cari", "1fr", [["Müşteri-6"]]],
  ["Kaynak", "83px", [["KANEPE"]]],
];

const DetailForm = () => (
  <Details>
    {DETAILS.map(([label, cols, values], i) => (
      <DetailRow key={label} $cols={cols}>
        <label htmlFor={`detail-${i}`}>{label}</label>
        {values.map(([value, align], k) => (
          <Field
            key={k}
            id={k === 0 ? `detail-${i}` : undefined}
            aria-label={k > 0 ? label : undefined}
            defaultValue={value}
            $align={align}
            readOnly
          />
        ))}
      </DetailRow>
    ))}
  </Details>
);

const ActionPanel = () => (
  <Actions>
    <PushButton disabled>
      <TableClock />
      Termin Gir
    </PushButton>
    <PushButton>
      <PlanIcon />
      Kaynak Planı Gir
    </PushButton>
    <Framed>
      <PushButton>
        <AlarmIcon size={16} />
        Hepsine Termin Gir
      </PushButton>
      <PushButton>
        <BlueClockIcon />
        Hepsine Kaynak Planı Gir
      </PushButton>
      <RedFrame $inset="-2px -2px -3px -3px" />
      <Badge $x={-29} $y={4}>4</Badge>
    </Framed>
    <PushButton>
      <RemoveIcon />
      Kaynak Planını Sil (*Ctrl)
    </PushButton>
    <FilterRow>
      <label htmlFor="filter">Filtre</label>
      <Select id="filter" defaultValue="Terminlenen">
        <option>Terminlenen</option>
      </Select>
      <Marker $x={29} $w={73} $h={19} />
      <Badge $x={-28} $y={-2}>2</Badge>
    </FilterRow>
  </Actions>
);

const App = () => (
  <>
    <GlobalStyle />
    <Window>
      <TitleBar>
        <Butterfly />
        <Title>Sipariş Planlama</Title>
        <WindowButton aria-label="Küçült">
          <Svg w={12} h={8}>
            <rect x=".5" y="2.500" width="11" height="4" rx="1" fill="#fff" stroke="#54657c" />
          </Svg>
        </WindowButton>
        <WindowButton aria-label="Büyüt">
          <Svg w={12} h={10}>
            <rect x=".5" y=".5" width="11" height="9" rx="1" fill="#fff" stroke="#54657c" />
            <rect x="3.500" y="3.500" width="5" height="3" fill="#a9bfd8" stroke="#54657c" />
          </Svg>
        </WindowButton>
        <WindowButton $close aria-label="Kapat">
          <Svg w={12} h={10}>
            <path d="M2 1l8 8M10 1L2 9" stroke="#5c3a44" strokeWidth="4" />
            <path d="M2 1l8 8M10 1L2 9" stroke="#fff" strokeWidth="2.500" />
          </Svg>
        </WindowButton>
      </TitleBar>

      <MenuRow>
        <Group>
          <Grip $h={14} />
          {MENUS.map((m) => (
            <MenuButton key={m}>
              {m}
              <Caret />
            </MenuButton>
          ))}
          <Overflow aria-label="Diğer">
            <More />
          </Overflow>
        </Group>
      </MenuRow>

      <ToolRow>
        <Group>
          <Grip />
          <ToolButton aria-label="Kaydet"><SaveIcon /></ToolButton>
          <ToolButton aria-label="Geri al"><UndoIcon /></ToolButton>
          <Divider />
          <ToolButton aria-label="Geri"><RoundArrow /></ToolButton>
          <ToolButton aria-label="İleri"><RoundArrow flip /></ToolButton>
          <Divider />
          <ToolButton aria-label="Bugün"><TargetPage /></ToolButton>
          <ToolButton aria-label="Tarihe git"><GotoIcon /></ToolButton>
          <Divider />
          <ToolButton aria-label="Hafta"><WeekPage /></ToolButton>
          <Overflow aria-label="Diğer"><More /></Overflow>
          <Badge $x={305} $y={-4}>9</Badge>
        </Group>
        <Group>
          <Grip />
          <ToolButton aria-label="Saat cetveli"><RulerClock /></ToolButton>
          <ToolButton aria-label="Zaman"><ClockRuler /></ToolButton>
          <Divider />
          <ToolButton><PageIcon label="1" /></ToolButton>
          <ToolButton><PageIcon label="5" /></ToolButton>
          <ToolButton><PageIcon label="7" /></ToolButton>
          <ToolButton $active><PageIcon label="31" /></ToolButton>
          <ToolButton><PageIcon label="1y" /></ToolButton>
          <ToolButton aria-label="Liste"><ListPage /></ToolButton>
          <Overflow aria-label="Diğer"><More /></Overflow>
          <Marker $x={10} $w={246} $h={36} />
        </Group>
        <Group>
          <Grip />
          <ToolButton><PageIcon label="31" sans /></ToolButton>
          <ToolButton><PeoplePage /></ToolButton>
          <ToolButton $active><PersonPage /></ToolButton>
          <Overflow aria-label="Diğer"><More /></Overflow>
        </Group>
        <Group>
          <Grip />
          <ToolButton $text={3}>
            <ScaleIcon />
            Skala
            <Caret />
          </ToolButton>
          <Overflow aria-label="Diğer"><More /></Overflow>
        </Group>
        <Group>
          <Grip />
          <ToolButton $text={4}>
            <UpdateIcon />
            Seçiliyi Güncelle
          </ToolButton>
          <ToolButton $text={4}>
            <RefreshIcon />
            Hepsini Güncelle
          </ToolButton>
          <Divider />
          <ToolButton $text={4}>
            <AlarmIcon size={30} />
            Çizelgele
          </ToolButton>
          <Overflow aria-label="Diğer"><More /></Overflow>
        </Group>
      </ToolRow>

      <Body>
        <Upper>
          <Side>
            <Months>
              {MONTHS.map((m) => (
                <MiniMonth key={m.title} month={m} />
              ))}
            </Months>
            <Badge $x={2} $y={133}>8</Badge>
            <ProfileForm />
          </Side>
          <Calendar />
        </Upper>
        <Lower>
          <Orders />
          <DetailForm />
          <ActionPanel />
        </Lower>
        <Tabs>
          <Tab $w={121}>
            <MessageIcon />
            Mesajlar
          </Tab>
          <TabLine />
          <Tab $w={118}>
            <ResourceIcon />
            Kaynaklar
          </Tab>
          <Tab $w={122} $active>
            <OrdersIcon />
            Siparişler
          </Tab>
        </Tabs>
      </Body>
    </Window>
  </>
);

export default App;
